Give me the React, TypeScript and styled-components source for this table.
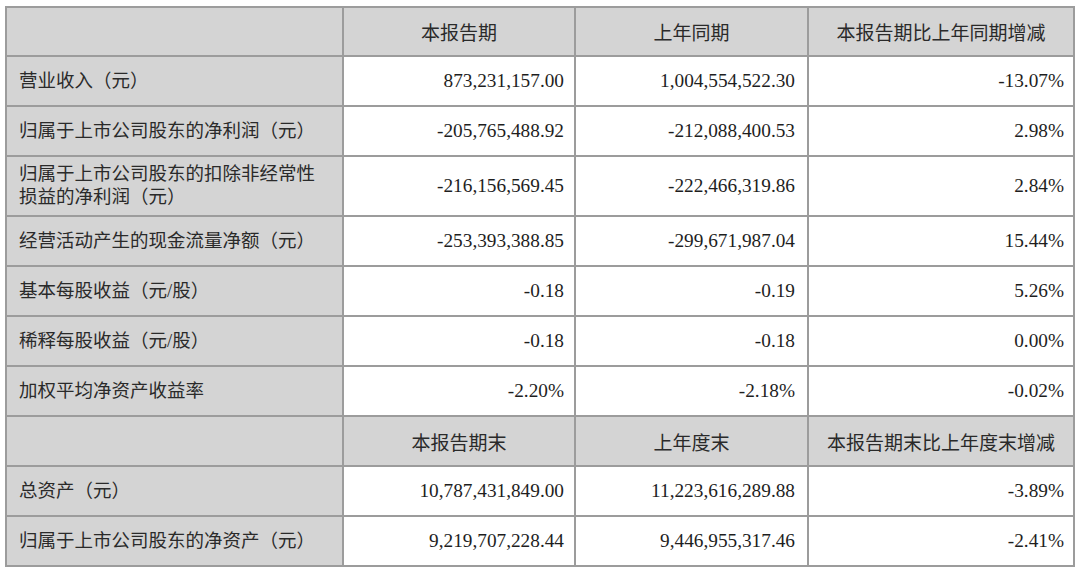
import styled, { createGlobalStyle } from "styled-components";

const GlobalStyle = createGlobalStyle`
  html, body {
    margin: 0;
    padding: 0;
    background: #ffffff;
  }
  body {
    font-family: "Liberation Serif", "Noto Sans CJK SC", serif;
    color: #1e1e1e;
  }
`;

type Row = { label: string[]; values: [string, string, string] };

const periodRows: Row[] = [
  { label: ["营业收入（元）"], values: ["873,231,157.00", "1,004,554,522.30", "-13.07%"] },
  { label: ["归属于上市公司股东的净利润（元）"], values: ["-205,765,488.92", "-212,088,400.53", "2.98%"] },
  {
    label: ["归属于上市公司股东的扣除非经常性", "损益的净利润（元）"],
    values: ["-216,156,569.45", "-222,466,319.86", "2.84%"],
  },
  { label: ["经营活动产生的现金流量净额（元）"], values: ["-253,393,388.85", "-299,671,987.04", "15.44%"] },
  { label: ["基本每股收益（元/股）"], values: ["-0.18", "-0.19", "5.26%"] },
  { label: ["稀释每股收益（元/股）"], values: ["-0.18", "-0.18", "0.00%"] },
  { label: ["加权平均净资产收益率"], values: ["-2.20%", "-2.18%", "-0.02%"] },
];

const balanceRows: Row[] = [
  { label: ["总资产（元）"], values: ["10,787,431,849.00", "11,223,616,289.88", "-3.89%"] },
  { label: ["归属于上市公司股东的净资产（元）"], values: ["9,219,707,228.44", "9,446,955,317.46", "-2.41%"] },
];

const Page = styled.div`
  padding: 6px 0 0 5px;
`;

const Table = styled.table`
  border-collapse: collapse;
  table-layout: fixed;
  width: 1070px;
  border: 2px solid #9c9c9c;
`;

const HeadRow = styled.tr<{ $h: number }>`
  height: ${(p) => p.$h}px;
  background: #d4d4d4;
`;

const BodyRow = styled.tr<{ $h: number }>`
  height: ${(p) => p.$h}px;
`;

const HeadCell = styled.td`
  border: 2px solid #9c9c9c;
  text-align: center;
  font-size: 19px;
  color: #2a2a2a;
  padding: 0 8px;
`;

const LabelCell = styled.td`
  border: 2px solid #9c9c9c;
  background: #d4d4d4;
  font-size: 18.5px;
  line-height: 23px;
  padding: 0 0 0 12px;
  color: #2a2a2a;
`;

const ValueCell = styled.td<{ $pad: number }>`
  border: 2px solid #9c9c9c;
  background: #ffffff;
  text-align: right;
  font-size: 19.3px;
  padding: 0 ${(p) => p.$pad}px 0 0;
  white-space: nowrap;
`;

const pads = [10, 12, 9];

const renderRows = (rows: Row[]) =>
  rows.map((r) => (
    <BodyRow key={r.label.join("")} $h={r.label.length > 1 ? 60 : 50}>
      <LabelCell>
        {r.label.map((line, i) => (
          <div key={i}>{line}</div>
        ))}
      </LabelCell>
      {r.values.map((v, i) => (
        <ValueCell key={i} $pad={pads[i]}>
          {v}
        </ValueCell>
      ))}
    </BodyRow>
  ));

export default function App() {
  return (
    <Page>
      <GlobalStyle />
      <Table>
        <colgroup>
          <col style={{ width: 337 }} />
          <col style={{ width: 232 }} />
          <col style={{ width: 233 }} />
          <col style={{ width: 266 }} />
        </colgroup>
        <tbody>
          <HeadRow $h={49}>
            <HeadCell />
            <HeadCell>本报告期</HeadCell>
            <HeadCell>上年同期</HeadCell>
            <HeadCell>本报告期比上年同期增减</HeadCell>
          </HeadRow>
          {renderRows(periodRows)}
          <HeadRow $h={50}>
            <HeadCell />
            <HeadCell>本报告期末</HeadCell>
            <HeadCell>上年度末</HeadCell>
            <HeadCell>本报告期末比上年度末增减</HeadCell>
          </HeadRow>
          {renderRows(balanceRows)}
        </tbody>
      </Table>
    </Page>
  );
}
